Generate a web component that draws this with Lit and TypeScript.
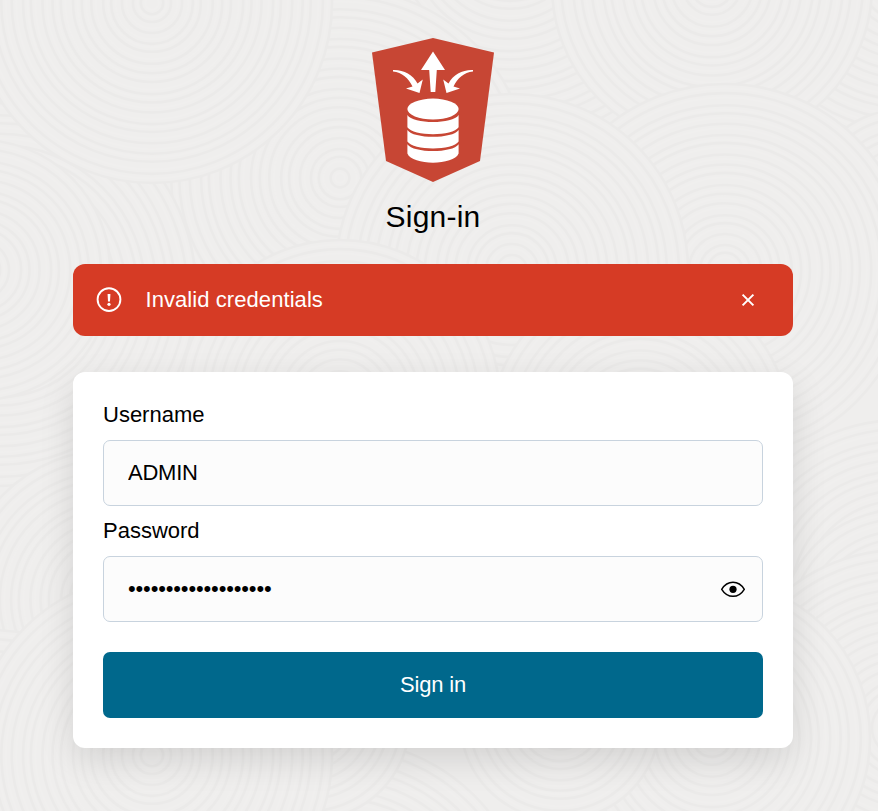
import { LitElement, html, svg, css } from "lit";
import { customElement, state } from "lit/decorators.js";

type Disc = [cx: number, cy: number, r: number];

const DISCS: Disc[] = [
  [345, -60, 240], [510, -60, 200], [340, 178, 190], [900, -20, 178], [900, 200, 90], [712, -14, 160],
  [725, 270, 186], [512, 270, 176], [0, 290, 196], [152, 3, 180],
  [-10, 270, 120], [340, 400, 160], [640, 430, 150], [900, 600, 180],
  [-20, 270, 130], [110, 600, 150], [900, 630, 120],
  [340, 930, 190], [900, 728, 178], [712, 738, 158],
  [-10, 830, 200], [560, 720, 100], [310, 720, 100], [152, 755, 180],
];

@customElement("sand-backdrop")
export class SandBackdrop extends LitElement {
  static styles = css`
    :host { display: block; }
    .canvas { display: block; width: 100%; height: 100%; }
    .disc { fill: #efeeed; }
    .ring { fill: none; stroke: #ebeae9; stroke-width: 2.6; }
    .ridge { fill: none; stroke: #f0efee; stroke-width: 2; }
  `;
  render() {
    return html`<svg class="canvas" viewBox="0 0 878 811" preserveAspectRatio="xMidYMid slice">
      ${DISCS.map(([cx, cy, r]) => {
        const radii = Array.from({ length: Math.floor(r / 10) }, (_, i) => r - i * 10 + Math.sin(i * 2.3) * 1.2);
        return svg`<circle class="disc" cx=${cx} cy=${cy} r=${r}></circle>
          ${radii.map((q) => svg`<circle class="ring" cx=${cx} cy=${cy} r=${q}></circle>
            <circle class="ridge" cx=${cx} cy=${cy} r=${Math.max(q - 4.5, 1)}></circle>`)}`;
      })}
    </svg>`;
  }
}

@customElement("app-root")
export class AppRoot extends LitElement {
  @state() private reveal = false;
  @state() private alert = true;

  static styles = css`
    :host {
      display: grid;
      height: 811px;
      overflow: hidden;
      background: #efeeed;
      color: #000;
      font: 22px/30px "Liberation Sans", Arial, sans-serif;
    }
    * { box-sizing: border-box; }
    .backdrop, .page { grid-area: 1 / 1; min-height: 0; }
    .backdrop { height: 811px; }
    .page {
      position: relative;
      width: 720px;
      margin-left: 73px;
      padding-top: 38px;
      display: flex;
      flex-direction: column;
      align-items: stretch;
    }
    .logo { display: block; width: 122px; height: 144px; align-self: center; }
    .title {
      margin: 15px 0 27px;
      font-size: 30px;
      letter-spacing: 0.2px;
      line-height: 40px;
      font-weight: 400;
      text-align: center;
    }
    .alert {
      display: flex;
      align-items: center;
      height: 72px;
      margin-bottom: 36px;
      padding: 0 36px 0 23px;
      border-radius: 12px;
      background: #d63b25;
      color: #fff;
    }
    .alert-icon { width: 26px; height: 26px; margin-right: 23.5px; }
    .alert-text { flex: 1; letter-spacing: 0.07px; }
    .icon-button { display: flex; padding: 0; border: 0; background: none; color: inherit; }
    .card {
      display: flex;
      flex-direction: column;
      height: 376px;
      padding: 28px 30px 30px;
      border-radius: 12px;
      background: #fff;
      box-shadow: 0 12px 36px -2px rgba(0, 0, 0, 0.13);
    }
    .label { height: 30px; margin-bottom: 10px; }
    .field {
      display: flex;
      align-items: center;
      height: 66px;
      margin-bottom: 10px;
      padding: 0 16px 0 24px;
      border: 1px solid #c8d3de;
      border-radius: 7px;
      background: #fcfcfc;
    }
    .field.last { margin-bottom: 30px; }
    .input {
      flex: 1;
      min-width: 0;
      padding: 0;
      border: 0;
      outline: 0;
      background: none;
      color: #000;
      font: inherit;
      letter-spacing: -0.25px;
    }
    .input[type="password"] { letter-spacing: -0.15px; }
    .submit {
      height: 66px;
      border: 0;
      border-radius: 7px;
      background: #00688c;
      color: #fff;
      font: inherit;
      letter-spacing: -0.2px;
    }
  `;

  private renderLogo() {
    return html`<svg class="logo" viewBox="0 0 122 144">
      <path fill="#c74634" d="M61 0 122 14.5 108 123 61 144 14 123 0 14.5Z" />
      <g fill="#fff">
        <path d="M61 13.5 73 32H64.8L63.3 54H58.7L57.2 32H49Z" />
        <path d="M21 32C31 31.5 41 36.5 45.5 45.5L50.8 41.5 47.5 55 34 50.5 40.5 48.5C36.5 40 30 34.5 21 33.5Z" />
        <path d="M101 32C91 31.5 81 36.5 76.5 45.5L71.2 41.5 74.5 55 88 50.5 81.5 48.5C85.5 40 92 34.5 101 33.5Z" />
        <ellipse cx="61" cy="71.1" rx="25.6" ry="10.5" />
        <path d="M35.4 77C41 86.4 81 86.4 86.6 77V89.3C81 98.5 41 98.5 35.4 89.3Z" />
        <path d="M35.4 91.9C41 101 81 101 86.6 91.9V103.6C81 112.8 41 112.8 35.4 103.6Z" />
        <path d="M35.4 106.2C41 115.3 81 115.3 86.6 106.2V115.5C82 127.7 40 127.7 35.4 115.5Z" />
      </g>
    </svg>`;
  }

  private renderAlert() {
    return html`<div class="alert">
      <svg class="alert-icon" viewBox="0 0 26 26">
        <circle cx="13" cy="12.6" r="11.4" fill="none" stroke="#fff" stroke-width="1.9" />
        <path d="M11.6 7H14.4L14 14.4H12Z" fill="#fff" />
        <circle cx="13" cy="17.3" r="1.6" fill="#fff" />
      </svg>
      <span class="alert-text">Invalid credentials</span>
      <button class="icon-button" aria-label="Dismiss" @click=${() => (this.alert = false)}>
        <svg width="18" height="18" viewBox="0 0 18 18">
          <path d="M3.6 3.6 14.4 14.4M14.4 3.6 3.6 14.4" stroke="#fff" stroke-width="2" />
        </svg>
      </button>
    </div>`;
  }

  render() {
    return html`
      <sand-backdrop class="backdrop"></sand-backdrop>
      <main class="page">
        ${this.renderLogo()}
        <h1 class="title">Sign-in</h1>
        ${this.alert ? this.renderAlert() : null}
        <form class="card" @submit=${(e: Event) => e.preventDefault()}>
          <label class="label" for="user">Username</label>
          <div class="field"><input class="input" id="user" .value=${"ADMIN"} /></div>
          <label class="label" for="pass">Password</label>
          <div class="field last">
            <input class="input" id="pass" type=${this.reveal ? "text" : "password"} .value=${"x".repeat(19)} />
            <button class="icon-button" type="button" aria-label="Show password"
              @click=${() => (this.reveal = !this.reveal)}>
              <svg width="26" height="18" viewBox="0 0 26 18">
                <path d="M1.7 9.3C4.5 4.8 8.5 2.3 13 2.3S21.5 4.8 24.3 9.3C21.5 13.8 17.5 16.3 13 16.3S4.5 13.8 1.7 9.3Z"
                  fill="none" stroke="#000" stroke-width="1.5" stroke-linejoin="round" />
                <circle cx="13" cy="9.3" r="3.6" fill="#000" />
              </svg>
            </button>
          </div>
          <button class="submit">Sign in</button>
        </form>
      </main>
    `;
  }
}
